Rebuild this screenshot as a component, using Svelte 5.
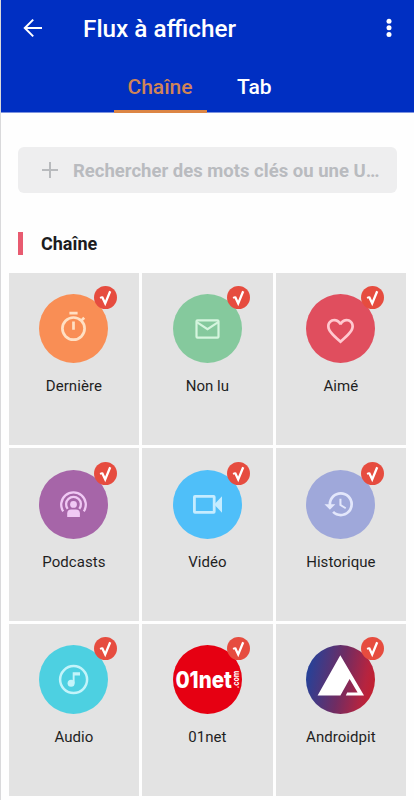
<script lang="ts">
	interface Feed {
		id: string;
		label: string;
		color: string;
	}

	const tabs = ['Chaîne', 'Tab'];

	const feeds: Feed[] = [
		{ id: 'latest', label: 'Dernière', color: '#f98e55' },
		{ id: 'unread', label: 'Non lu', color: '#85c99d' },
		{ id: 'liked', label: 'Aimé', color: '#e04e5e' },
		{ id: 'podcasts', label: 'Podcasts', color: '#a665a8' },
		{ id: 'video', label: 'Vidéo', color: '#4fbff9' },
		{ id: 'history', label: 'Historique', color: '#9fa8da' },
		{ id: 'audio', label: 'Audio', color: '#4dd0e1' },
		{ id: '01net', label: '01net', color: '#e60012' },
		{ id: 'androidpit', label: 'Androidpit', color: '#6d2e62' }
	];

	let activeTab = $state('Chaîne');
	let selected = $state(feeds.map((f) => f.id));

	function toggle(id: string) {
		selected = selected.includes(id) ? selected.filter((s) => s !== id) : [...selected, id];
	}
</script>

<div class="screen">
	<header>
		<div class="app-bar">
			<button class="icon-btn" aria-label="Retour">
				<svg width="20" height="20" viewBox="0 0 20 20" fill="none" stroke="#fff" stroke-width="2">
					<path d="M19 10H2.2M10.2 1.6 1.8 10l8.4 8.4" />
				</svg>
			</button>
			<h1>Flux à afficher</h1>
			<button class="icon-btn" aria-label="Plus">
				<svg width="6" height="20" viewBox="0 0 6 20" fill="#fff">
					<circle cx="3" cy="3.2" r="2.5" />
					<circle cx="3" cy="9.8" r="2.5" />
					<circle cx="3" cy="16.4" r="2.5" />
				</svg>
			</button>
		</div>
		<nav>
			{#each tabs as tab}
				<button class="tab" class:active={tab === activeTab} onclick={() => (activeTab = tab)}>{tab}</button>
			{/each}
		</nav>
	</header>

	<main>
		<div class="search">
			<svg width="18" height="18" viewBox="0 0 18 18" stroke="#b8babd" stroke-width="2">
				<path d="M9 1v16M1 9h16" />
			</svg>
			<span>Rechercher des mots clés ou une U…</span>
		</div>

		<h2>Chaîne</h2>

		<div class="grid">
			{#each feeds as feed (feed.id)}
				<button class="tile" onclick={() => toggle(feed.id)}>
					<span class="avatar">
						<svg class="disc" viewBox="0 0 69 69">
							{#if feed.id === 'androidpit'}
								<defs>
									<linearGradient id="pit" x1="0" y1="0.4" x2="1" y2="0.6">
										<stop offset="0" stop-color="#24429a" />
										<stop offset="0.5" stop-color="#702c62" />
										<stop offset="0.85" stop-color="#b52440" />
										<stop offset="1" stop-color="#c4202f" />
									</linearGradient>
								</defs>
							{/if}
							<circle cx="34.5" cy="34.5" r="34.5" fill={feed.id === 'androidpit' ? 'url(#pit)' : feed.color} />

							{#if feed.id === 'latest'}
								<g fill="none" stroke="#ffe0c4" stroke-width="2.7">
									<circle cx="34.5" cy="34.6" r="11.1" />
									<path d="M30.4 19.2h8.2M34.5 27.4v8.4M42.3 26.6l2.9-2.9" />
								</g>
							{:else if feed.id === 'unread'}
								<g fill="none" stroke="#d5f5de" stroke-width="2.2">
									<rect x="23.5" y="26.3" width="22" height="17.4" rx="1" />
									<path d="M23.8 28.2 34.5 35.2 45.2 28.2" />
								</g>
							{:else if feed.id === 'liked'}
								<path
									transform="translate(18.3 20.8) scale(1.35)"
									fill="#ffc9d0"
									d="M16.5 3c-1.74 0-3.41.81-4.5 2.09C10.91 3.81 9.24 3 7.5 3 4.42 3 2 5.42 2 8.5c0 3.78 3.4 6.86 8.55 11.54L12 21.35l1.45-1.32C18.6 15.36 22 12.28 22 8.5 22 5.42 19.58 3 16.5 3zm-4.4 15.55l-.1.1-.1-.1C7.14 14.24 4 11.39 4 8.5 4 6.5 5.5 5 7.5 5c1.54 0 3.04.99 3.57 2.36h1.87C13.46 5.99 14.96 5 16.5 5c2 0 3.5 1.5 3.5 3.5 0 2.89-3.14 5.74-7.9 10.05z"
								/>
							{:else if feed.id === 'podcasts'}
								<g fill="none" stroke="#f0c8f4" stroke-width="2.3">
									<path d="M24.2 41.4a12.3 12.3 0 1 1 20.6 0" />
									<path d="M28.7 38.9a7.4 7.4 0 1 1 11.6 0" />
								</g>
								<circle cx="34.5" cy="34.4" r="3.4" fill="#f0c8f4" />
								<path d="M28.2 47v-3.6q0-4 4-4h4.7q4 0 4 4V47z" fill="#f0c8f4" />
							{:else if feed.id === 'video'}
								<rect x="21.4" y="26.4" width="19.8" height="16" rx=".6" fill="none" stroke="#c5ecff" stroke-width="2.8" />
								<path d="M41.2 34.4 49 26.3v16.4z" fill="#c5ecff" />
							{:else if feed.id === 'history'}
								<path
									transform="translate(17.1 17.9) scale(1.36)"
									fill="#e3e7fb"
									d="M13 3a9 9 0 0 0-9 9H1l3.89 3.89.07.14L9 12H6c0-3.87 3.13-7 7-7s7 3.13 7 7-3.13 7-7 7c-1.93 0-3.68-.79-4.94-2.06l-1.42 1.42A8.954 8.954 0 0 0 13 21a9 9 0 0 0 0-18zm-1 5v5l4.28 2.54.72-1.21-3.5-2.08V8H12z"
								/>
							{:else if feed.id === 'audio'}
								<circle cx="34.6" cy="34.6" r="13.5" fill="none" stroke="#c3f4fa" stroke-width="2.5" />
								<circle cx="32.1" cy="38.3" r="3.5" fill="#c3f4fa" />
								<path d="M33.7 27.3h7.3v3.3h-5.4v7.7h-1.9z" fill="#c3f4fa" />
							{:else if feed.id === '01net'}
								<text class="logo" x="2.4" y="43" textLength="56.5" lengthAdjust="spacingAndGlyphs">01net</text>
								<text class="logo com" transform="translate(65.6 43.2) rotate(-90)" textLength="17.5" lengthAdjust="spacingAndGlyphs">.com</text>
							{:else if feed.id === 'androidpit'}
								<path
									fill="#fff"
									fill-rule="evenodd"
									d="M34.3 10.3 58 50.6H39.8L41.2 47.6h10.4L44.8 36 43.6 34 34.4 50.6H11.6z"
								/>
							{/if}
						</svg>
						{#if selected.includes(feed.id)}
							<svg class="badge" viewBox="0 0 23 23">
								<circle cx="11.5" cy="11.5" r="11.5" fill="#e64c3f" />
								<path d="M6 11.8 8.8 10.8" fill="none" stroke="#fff" stroke-width="1.8" />
								<path d="M8.2 11 11.2 17.4 16.2 5.2" fill="none" stroke="#fff" stroke-width="2.3" />
							</svg>
						{/if}
					</span>
					<span class="label">{feed.label}</span>
				</button>
			{/each}
			{#each [1, 2, 3] as n (n)}
				<div class="tile"></div>
			{/each}
		</div>
	</main>
</div>

<style>
	:global(body) {
		background: #fefefe;
		overflow: hidden;
	}

	.screen {
		box-sizing: border-box;
		height: 800px;
		overflow: hidden;
		border-left: 1px solid #d9d9db;
		background: #fefefe;
		font-family: Roboto, 'Liberation Sans', sans-serif;
	}

	button {
		padding: 0;
		border: 0;
		background: none;
		font: inherit;
	}

	header {
		height: 112px;
		margin-left: -1px;
		background: #002fc2;
		border-bottom: 1px solid #7d93df;
		box-sizing: content-box;
	}

	.app-bar {
		display: flex;
		align-items: center;
		height: 56px;
		padding: 0 22px 0 23px;
	}

	.icon-btn {
		display: flex;
	}

	h1 {
		flex: 1;
		margin: 2px 0 0 40px;
		color: #fff;
		font-size: 24.3px;
		font-weight: 500;
		line-height: 28px;
	}

	nav {
		display: flex;
		height: 56.5px;
		padding-left: 114px;
	}

	.tab {
		box-sizing: border-box;
		padding: 8px 14px 0 13px;
		border-bottom: 3px solid transparent;
		color: #fff;
		font-size: 21px;
		font-weight: 500;
		width: 93px;
	}

	.tab:last-child {
		width: auto;
		padding-left: 30px;
	}

	.tab.active {
		color: #cf8458;
		border-bottom-color: #dc8544;
	}

	main {
		padding: 34px 8px 0 7.7px;
	}

	.search {
		display: flex;
		align-items: center;
		gap: 14px;
		height: 46px;
		margin: 0 9px 0 9.3px;
		padding-left: 23px;
		border-radius: 6px;
		background: #eeeeef;
		color: #b9bbbf;
		font-size: 18.5px;
		font-weight: 700;
		white-space: nowrap;
	}

	.search span {
		padding-top: 1.5px;
	}

	h2 {
		margin: 39px 0 17.8px 9.3px;
		padding-left: 18px;
		border-left: 5px solid #e85b70;
		color: #1c1c1e;
		font-size: 18px;
		font-weight: 700;
		line-height: 23px;
	}

	.grid {
		display: grid;
		grid-template-columns: repeat(3, 130.4px);
		grid-auto-rows: 172.5px;
		gap: 3.1px;
	}

	.tile {
		display: flex;
		flex-direction: column;
		align-items: center;
		justify-content: flex-start;
		padding-top: 21.5px;
		background: #e3e3e3;
		box-sizing: border-box;
	}

	.avatar {
		position: relative;
		width: 69px;
		height: 69px;
	}

	.disc {
		display: block;
		width: 69px;
		height: 69px;
	}

	.badge {
		position: absolute;
		top: -8px;
		right: -8.5px;
		width: 23px;
		height: 23px;
	}

	.logo {
		fill: #fff;
		font-family: Inter, Roboto, sans-serif;
		font-size: 23.5px;
		font-weight: 800;
	}

	.com {
		font-size: 9px;
		font-weight: 700;
	}

	.label {
		margin-top: 13px;
		color: #1f1f1f;
		font-size: 15px;
		line-height: 20px;
		letter-spacing: 0.05px;
	}
</style>
